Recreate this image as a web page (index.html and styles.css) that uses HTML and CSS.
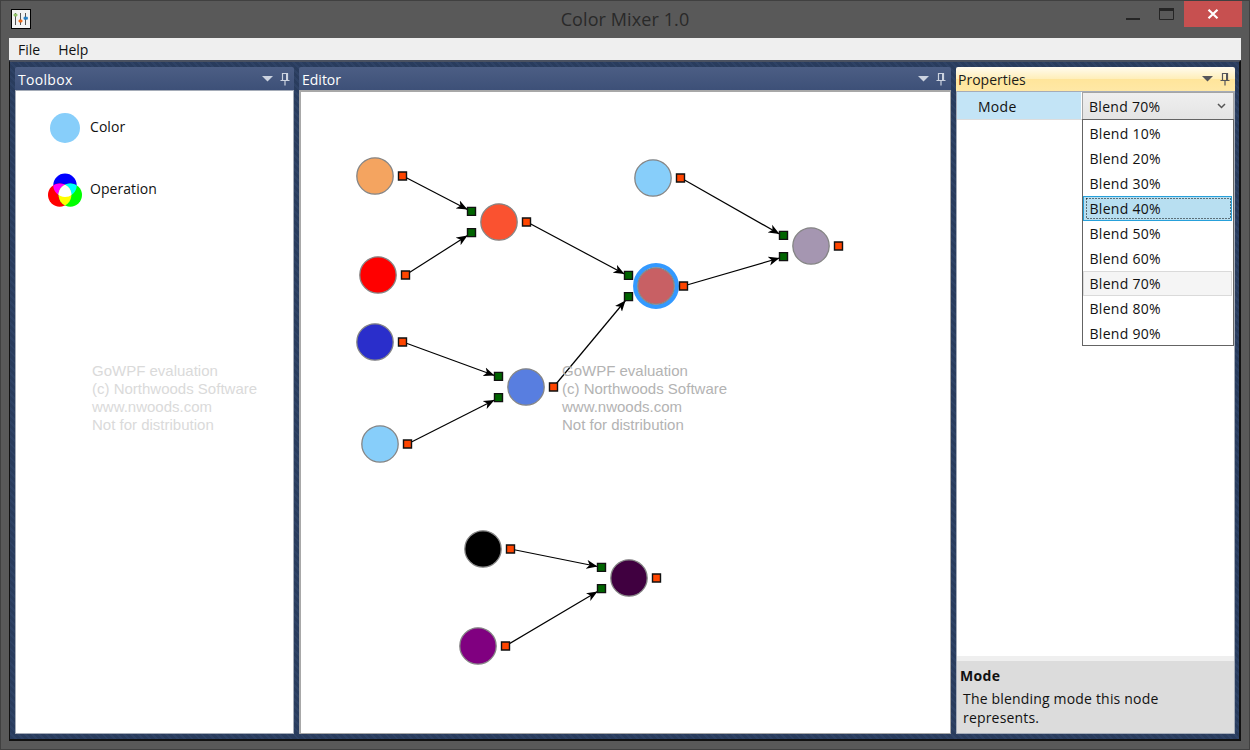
FILE: index.html
```html
<!DOCTYPE html>
<html lang="en">
<head>
<meta charset="utf-8">
<title>Color Mixer 1.0</title>
<link rel="stylesheet" href="styles.css">
</head>
<body>
<svg class="defs" width="0" height="0">
  <symbol id="tools" viewBox="0 0 28 14">
    <path d="M0 4h11L5.500 9.500z" fill="currentColor"/>
    <path d="M20.500 8V1.500h5V8M18.500 8.500h9M23 9v4.500" fill="none" stroke="currentColor" stroke-width="1.200"/>
    <path d="M24 1h2v7h-2z" fill="currentColor"/>
  </symbol>
</svg>
<div class="window">
  <header class="titlebar">
    <svg class="app-icon" width="20" height="20" viewBox="0 0 20 20">
      <rect x=".5" y=".5" width="19" height="19" fill="#f3f3f3" stroke="#000"/>
      <path d="M4.500 4v12M9.500 4v12M14.500 4v12" stroke="#555"/>
      <path d="M3 5h3v2H3z" fill="#92c36a" stroke="#92c36a" stroke-width=".8"/>
      <path d="M8 11h3v2H8z" fill="#ef6a1a" stroke="#ef6a1a" stroke-width=".8"/>
      <path d="M13 8.200h3.400v2H13z" fill="#2380c8" stroke="#2380c8" stroke-width=".8"/>
    </svg>
    <h1 class="title">Color Mixer 1.0</h1>
    <div class="controls">
      <svg width="52" height="26" viewBox="0 0 52 26">
        <path d="M0 17h14v2H0z" fill="#252525"/>
        <path d="M33.500 7.500h14v11h-14z" fill="none" stroke="#252525"/>
        <path d="M33 7h15v3H33z" fill="#252525"/>
      </svg>
      <div class="close"><svg width="12" height="10" viewBox="0 0 12 10"><path d="M1.500.8l9 8.400M10.500.8l-9 8.400" stroke="#fff" stroke-width="2.200"/></svg></div>
    </div>
  </header>
  <nav class="menubar"><span>File</span><span>Help</span></nav>
  <main class="dock">
    <section class="panel toolbox">
      <div class="head"><span>Toolbox</span><svg class="tools"><use href="#tools"/></svg></div>
      <div class="body">
        <div class="item"><svg width="36" height="36" viewBox="0 0 36 36"><circle cx="18" cy="18" r="15" fill="#87cefa"/></svg><span>Color</span></div>
        <div class="item op"><svg width="36" height="36" viewBox="0 0 36 36">
          <clipPath id="cb"><circle cx="18" cy="13.300" r="11.700"/></clipPath>
          <clipPath id="cr"><circle cx="12.700" cy="23.100" r="11.700"/></clipPath>
          <circle cx="18" cy="13.300" r="11.700" fill="#00f"/>
          <circle cx="12.700" cy="23.100" r="11.700" fill="#f00"/>
          <circle cx="23.300" cy="23.100" r="11.700" fill="#0f0"/>
          <g clip-path="url(#cb)"><circle cx="12.700" cy="23.100" r="11.700" fill="#f0f"/><circle cx="23.300" cy="23.100" r="11.700" fill="#0ff"/></g>
          <g clip-path="url(#cr)"><circle cx="23.300" cy="23.100" r="11.700" fill="#ff0"/><g clip-path="url(#cb)"><circle cx="23.300" cy="23.100" r="11.700" fill="#fff"/></g></g>
        </svg><span>Operation</span></div>
        <p class="mark">GoWPF evaluation<br>(c) Northwoods Software<br>www.nwoods.com<br>Not for distribution</p>
      </div>
    </section>
    <section class="panel editor">
      <div class="head"><span>Editor</span><svg class="tools"><use href="#tools"/></svg></div>
      <div class="body">
        <svg class="diagram" width="649" height="641" viewBox="301 92 649 641">
          <defs>
            <marker id="arrow" viewBox="0 0 12 10" markerWidth="12" markerHeight="10" markerUnits="userSpaceOnUse" refX="11" refY="5" orient="auto"><path d="M0 .5L11 5 0 9.500 3 5z"/></marker>
            <path id="port" d="M-4-4h8v8h-8z"/>
          </defs>
          <g class="links">
            <path d="M403 176L467.500 209.500"/>
            <path d="M405.500 275L467.500 235.500"/>
            <path d="M403 342L494.500 375.500"/>
            <path d="M407.500 444L494.500 400"/>
            <path d="M527 222L624.500 274"/>
            <path d="M553.500 387L625.500 300.500"/>
            <path d="M681 178L779.500 234"/>
            <path d="M683.500 286L779.500 258"/>
            <path d="M510.500 549L597.500 566.500"/>
            <path d="M505.500 646L597.500 591.500"/>
          </g>
          <g class="nodes">
            <circle cx="375" cy="176" r="18.200" fill="#f4a460"/>
            <circle cx="378" cy="275" r="18.200" fill="#f00"/>
            <circle cx="375" cy="342" r="18.200" fill="#2a2ecb"/>
            <circle cx="380" cy="444" r="18.200" fill="#87cefa"/>
            <circle cx="499" cy="222" r="18.200" fill="#fa5230"/>
            <circle cx="526" cy="387" r="18.200" fill="#587ee0"/>
            <circle cx="653" cy="178" r="18.200" fill="#87cefa"/>
            <circle class="selection" cx="656" cy="286" r="20.700"/>
            <circle cx="656" cy="286" r="18.200" fill="#c86064"/>
            <circle cx="811" cy="246" r="18.200" fill="#a596b1"/>
            <circle cx="483" cy="549" r="18.200" fill="#000"/>
            <circle cx="478" cy="646" r="18.200" fill="#800080"/>
            <circle cx="629" cy="578" r="18.200" fill="#400040"/>
          </g>
          <g class="outputs">
            <use href="#port" x="402.500" y="176"/><use href="#port" x="405.500" y="275"/><use href="#port" x="402.500" y="342"/><use href="#port" x="407.500" y="444"/><use href="#port" x="526.500" y="222"/><use href="#port" x="553.500" y="387"/><use href="#port" x="680.500" y="178"/><use href="#port" x="683.500" y="286"/><use href="#port" x="838.500" y="246"/><use href="#port" x="510.500" y="549"/><use href="#port" x="505.500" y="646"/><use href="#port" x="656.500" y="578"/>
          </g>
          <g class="inputs">
            <use href="#port" x="471.500" y="211.400"/><use href="#port" x="471.500" y="232.600"/><use href="#port" x="498.500" y="376.400"/><use href="#port" x="498.500" y="397.600"/><use href="#port" x="628.500" y="275.400"/><use href="#port" x="628.500" y="296.600"/><use href="#port" x="783.500" y="235.400"/><use href="#port" x="783.500" y="256.600"/><use href="#port" x="601.500" y="567.400"/><use href="#port" x="601.500" y="588.600"/>
          </g>
        </svg>
        <p class="mark">GoWPF evaluation<br>(c) Northwoods Software<br>www.nwoods.com<br>Not for distribution</p>
      </div>
    </section>
    <section class="panel properties">
      <div class="head"><span>Properties</span><svg class="tools"><use href="#tools"/></svg></div>
      <div class="body">
        <div class="row">
          <div class="name">Mode</div>
          <div class="combo"><span>Blend 70%</span><svg width="9" height="6" viewBox="0 0 9 6"><path d="M1 1l3.500 3.500L8 1" fill="none" stroke="#555" stroke-width="1.500"/></svg>
            <ul class="list">
              <li>Blend 10%</li><li>Blend 20%</li><li>Blend 30%</li><li class="hover"><svg width="145" height="21"><rect x=".5" y=".5" width="144" height="20"/></svg>Blend 40%</li><li>Blend 50%</li><li>Blend 60%</li><li class="current">Blend 70%</li><li>Blend 80%</li><li>Blend 90%</li>
            </ul>
          </div>
        </div>
        <div class="help"><h2>Mode</h2><p>The blending mode this node<br>represents.</p></div>
      </div>
    </section>
  </main>
</div>
</body>
</html>
```
FILE: styles.css
```css
* { box-sizing: border-box; }
body { margin: 0; font: 14px/18px "Open Sans", "Noto Sans", sans-serif; color: #111; overflow: hidden; }
h1, h2, p, ul { margin: 0; padding: 0; }
svg { display: block; flex: none; }
.defs { position: absolute; }
.window { width: 1250px; height: 750px; background: #595959; border: 1px solid #404040; padding: 0 8px; display: flex; flex-direction: column; }
.titlebar { height: 37px; display: grid; grid-template-columns: 116px 1fr 116px; align-items: start; }
.app-icon { margin: 8px 0 0 2px; }
.title { text-align: center; font-size: 18px; line-height: 36px; font-weight: 400; letter-spacing: .1px; color: #292929; }
.controls { display: flex; justify-content: flex-end; gap: 6px; margin-right: -1px; }
.close { width: 58px; height: 26px; background: #c75050; display: flex; align-items: center; justify-content: center; }
.menubar { height: 22px; background: #efefef; display: flex; gap: 18px; padding: 3px 9px 0; }
.dock { flex: none; height: 681px; margin-bottom: 8px; background: repeating-linear-gradient(45deg, #293c5d 0 3px, #2e4265 3px 5px); border: solid #111; border-width: 2px 2px 2px 1px; border-top-color: #4a5160; padding: 5px 4px 5px 5px; display: flex; gap: 5px; }
.panel { display: flex; flex-direction: column; flex: none; }
.toolbox { width: 279px; }
.editor { width: 652px; }
.properties { width: 279px; }
.head { height: 24px; color: #fff; background: linear-gradient(#4c5e84, #3d5078); border-radius: 2px 2px 0 0; padding: 4px 4px 0 3px; display: flex; justify-content: space-between; }
.tools { width: 28px; height: 14px; margin-top: 1px; color: #ccd3e0; }
.body { flex: 1; background: #fff; border: 1px solid #a5acb8; display: flex; flex-direction: column; }
.toolbox .head { height: 23px; letter-spacing: .3px; }
.properties .head { color: #1b1b1b; padding-left: 2px; background: linear-gradient(#fffbef, #ffeeb8 50%, #ffe59b 52%, #ffe8a6); }
.properties .tools { color: #55555a; margin-right: 1px; }
.editor .head { padding-left: 3px; }
.editor .tools { margin-right: 1px; }
.editor .body { border: solid #a8a8a8; border-width: 2px 1px 1px 2px; display: grid; }
.editor .head { height: 24px; }
.item { display: flex; align-items: center; gap: 7px; padding: 19px 0 0 31px; }
.item.op { padding-top: 26px; }
.item span { margin-top: -2px; letter-spacing: .06px; }
.mark { font: 15px/18px "Liberation Sans", Arial, sans-serif; color: #dadada; padding: 154px 0 0 76px; }
.diagram, .editor .mark { grid-area: 1 / 1; }
.editor .mark { color: #b3b3b3; padding: 270px 0 0 261px; }
.links path { stroke: #000; stroke-width: 1.200; marker-end: url(#arrow); }
.nodes circle { stroke: #858585; stroke-width: 1.300; }
.nodes .selection { fill: none; stroke: #3399ff; stroke-width: 4.500; }
.outputs { fill: #ff4500; stroke: #111; stroke-width: 1.400; }
.inputs { fill: #006400; stroke: #111; stroke-width: 1.400; }
.row { display: flex; height: 28px; border-bottom: 1px solid #ddd; letter-spacing: .28px; }
.name { width: 124px; background: #c3e4f6; padding: 6px 0 0 21px; }
.combo { position: relative; width: 152px; height: 28px; margin-left: 1px; background: linear-gradient(#efefef, #e4e4e4); border: 1px solid #a5a5a5; padding: 5px 7px 0 6px; display: flex; justify-content: space-between; }
.combo > svg { margin-top: 5px; }
.list { position: absolute; left: -1px; top: 26px; width: 152px; height: 227px; list-style: none; background: #fff; border: 1px solid #646464; padding: 1px 1px 0 0; }
.list li { height: 25px; padding: 3px 0 0 5.500px; border: 1px solid transparent; }
.list .hover { position: relative; background: #b8dff1; border-color: #26a0da; }
.hover svg { position: absolute; left: 2px; top: 1px; }
.hover rect { fill: none; stroke: #000; stroke-dasharray: 1 2; }
.list .current { background: #f5f5f5; border-color: #dadada; }
.help { height: 77px; margin-top: auto; background: #dcdcdc; border-top: 5px solid #efefef; padding: 6px 3px; }
.help h2 { font-size: 14px; line-height: 18px; letter-spacing: .3px; }
.help p { line-height: 19px; letter-spacing: .18px; padding: 4px 0 0 3px; }
```
